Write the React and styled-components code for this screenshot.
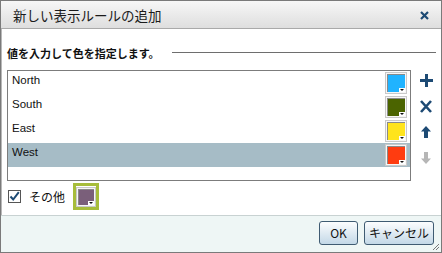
import React from 'react'
import styled, { createGlobalStyle } from 'styled-components'

const GlobalStyle = createGlobalStyle`
  html, body {
    margin: 0;
    padding: 0;
    background: #ffffff;
  }
  * {
    box-sizing: border-box;
  }
`

const FONT = `"Liberation Sans", "Noto Sans CJK JP", sans-serif`

// Dialog shell
const Dialog = styled.div`
  width: 442px;
  height: 253px;
  border: 1px solid #7a7a7a;
  box-shadow: inset 1px 0 0 #b8b8b8;
  display: flex;
  flex-direction: column;
  background: #ffffff;
  font-family: ${FONT};
  color: #111;
  position: relative;
`

const TitleBar = styled.header`
  height: 28px;
  flex-shrink: 0;
  border-bottom: 1px solid #a9a9a9;
  background: linear-gradient(#f7f7f7, #dedede);
  display: flex;
  align-items: center;
  justify-content: space-between;
  padding: 0 12px 0 12px;
`

const Title = styled.h1`
  margin: 0;
  font-size: 13.5px;
  font-weight: normal;
  font-family: "Noto Sans CJK JP", sans-serif;
  color: #1b1b1b;
  line-height: 18px;
`

const CloseBtn = styled.button`
  border: 0;
  background: transparent;
  padding: 0;
  width: 10px;
  height: 10px;
  display: flex;
  align-items: center;
  justify-content: center;
  margin-top: 1px;
`

const Body = styled.main`
  flex: 1;
  display: flex;
  flex-direction: column;
  padding: 17px 0 0 6px;
`

const SectionHead = styled.div`
  display: flex;
  align-items: center;
  gap: 12px;
  height: 14px;
  padding-right: 5px;
`

const SectionText = styled.span`
  font-size: 11px;
  font-weight: bold;
  font-family: "Noto Sans CJK JP", sans-serif;
  white-space: nowrap;
  line-height: 14px;
`

const Rule = styled.div`
  flex: 1;
  height: 1px;
  background: #6e6e6e;
  margin-top: -2px;
`

const ListArea = styled.div`
  display: flex;
  margin-top: 10px;
`

const ListBox = styled.ul`
  flex: 1;
  height: 111px;
  margin: 0;
  padding: 0;
  list-style: none;
  border: 1px solid #7c7c7c;
`

const Row = styled.li`
  height: 24px;
  display: flex;
  justify-content: space-between;
  align-items: flex-start;
  padding-left: 4px;
  background: ${p => (p.$selected ? '#a6bcc6' : 'transparent')};
`

const Label = styled.span`
  font-size: 11.5px;
  line-height: 16px;
  padding-top: 1px;
`

const Swatch = styled.div`
  position: relative;
  width: ${p => p.$size || 22}px;
  height: ${p => p.$size || 22}px;
  margin: ${p => (p.$inset ? '0' : '1px 3px 0 0')};
  border: 1px solid #c9c9c9;
  background: #f6f6f6;
  padding: 1px;
  flex-shrink: 0;
`

const SwatchFill = styled.div`
  width: 100%;
  height: 100%;
  background: ${p => p.$color};
  border-top: 1px solid #8a8a8a;
  border-left: 1px solid #8a8a8a;
`

const DropMark = styled.span`
  position: absolute;
  right: 1px;
  bottom: 1px;
  width: 6px;
  height: 4px;
  background: #ffffff;
  display: flex;
  align-items: center;
  justify-content: center;
  &::after {
    content: '';
    border-left: 2px solid transparent;
    border-right: 2px solid transparent;
    border-top: 2px solid #111;
  }
`

const Tools = styled.div`
  width: 30px;
  display: flex;
  flex-direction: column;
  align-items: center;
  padding-top: 3px;
  gap: 12px;
`

const ToolBtn = styled.button`
  border: 0;
  background: transparent;
  padding: 0;
  width: 14px;
  height: 14px;
  display: flex;
  align-items: center;
  justify-content: center;
`

const OtherRow = styled.div`
  display: flex;
  align-items: center;
  gap: 8px;
  height: 27px;
  margin-top: 2px;
`

const Check = styled.span`
  width: 13px;
  height: 13px;
  border: 1px solid #555;
  background: #fff;
  display: flex;
  align-items: center;
  justify-content: center;
  margin-left: 1px;
`

const OtherLabel = styled.span`
  font-size: 12px;
  font-family: "Noto Sans CJK JP", sans-serif;
  line-height: 16px;
`

const Highlight = styled.div`
  border: 3px solid #a7bd3b;
  width: 26px;
  height: 27px;
  display: flex;
  align-items: center;
  justify-content: center;
`

const Footer = styled.footer`
  height: 37px;
  flex-shrink: 0;
  border-top: 1px solid #c8d2d2;
  background: #eef6f5;
  display: flex;
  justify-content: flex-end;
  align-items: flex-start;
  gap: 6px;
  padding: 5px 7px 0 0;
  position: relative;
`

const Button = styled.button`
  height: 24px;
  width: ${p => p.$w}px;
  border: 1px solid #3f5b72;
  border-radius: 3px;
  background: linear-gradient(#fcfdfe, #c3d8e7);
  font-family: "Noto Sans CJK JP", ${FONT};
  font-size: 12px;
  color: #111;
  padding: 0;
  line-height: 20px;
`

const Grip = styled.svg`
  position: absolute;
  right: 1px;
  bottom: 1px;
`

const BLUE = '#1d4a74'

const rules = [
  { name: 'North', color: '#20b3ff' },
  { name: 'South', color: '#4b6400' },
  { name: 'East', color: '#ffe41c' },
  { name: 'West', color: '#ff3c10', selected: true },
]

const App = () => {
  return (
    <>
      <GlobalStyle />
      <Dialog>
        <TitleBar>
          <Title>新しい表示ルールの追加</Title>
          <CloseBtn aria-label="close">
            <svg width="9" height="9" viewBox="0 0 9 9">
              <path d="M1 1 L8 8 M8 1 L1 8" stroke={BLUE} strokeWidth="2.2" />
            </svg>
          </CloseBtn>
        </TitleBar>

        <Body>
          <SectionHead>
            <SectionText>値を入力して色を指定します。</SectionText>
            <Rule />
          </SectionHead>

          <ListArea>
            <ListBox>
              {rules.map(r => (
                <Row key={r.name} $selected={r.selected}>
                  <Label>{r.name}</Label>
                  <Swatch>
                    <SwatchFill $color={r.color} />
                    <DropMark />
                  </Swatch>
                </Row>
              ))}
            </ListBox>
            <Tools>
              <ToolBtn aria-label="add">
                <svg width="13" height="13" viewBox="0 0 13 13">
                  <path d="M6.5 0 V13 M0 6.5 H13" stroke={BLUE} strokeWidth="3" />
                </svg>
              </ToolBtn>
              <ToolBtn aria-label="delete">
                <svg width="12" height="13" viewBox="0 0 12 13">
                  <path d="M1 1 L11 12 M11 1 L1 12" stroke={BLUE} strokeWidth="2.6" />
                </svg>
              </ToolBtn>
              <ToolBtn aria-label="up">
                <svg width="10" height="12" viewBox="0 0 10 12">
                  <path d="M5 0 L10 5.5 H7 V12 H3 V5.5 H0 Z" fill={BLUE} />
                </svg>
              </ToolBtn>
              <ToolBtn aria-label="down">
                <svg width="10" height="12" viewBox="0 0 10 12">
                  <path d="M3 0 H7 V6.5 H10 L5 12 L0 6.5 H3 Z" fill="#b6b6b6" />
                </svg>
              </ToolBtn>
            </Tools>
          </ListArea>

          <OtherRow>
            <Check>
              <svg width="11" height="11" viewBox="0 0 11 11">
                <path d="M1.5 5.5 L4.2 8.5 L9.8 1.2" stroke={BLUE} strokeWidth="2" fill="none" />
              </svg>
            </Check>
            <OtherLabel>その他</OtherLabel>
            <Highlight>
              <Swatch $size={20} $inset>
                <SwatchFill $color="#7a5f7a" />
                <DropMark />
              </Swatch>
            </Highlight>
          </OtherRow>
        </Body>

        <Footer>
          <Button $w={39}>OK</Button>
          <Button $w={70}>キャンセル</Button>
          <Grip width="8" height="8" viewBox="0 0 8 8">
            <path d="M7 1 L1 7 M7 4 L4 7" stroke="#777" strokeWidth="1" />
          </Grip>
        </Footer>
      </Dialog>
    </>
  )
}

export default App
